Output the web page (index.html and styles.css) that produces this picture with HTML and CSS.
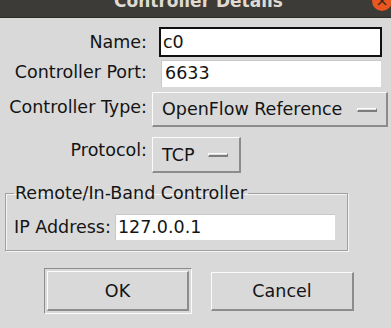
FILE: index.html
```html
<!DOCTYPE html>
<html lang="en">
<head>
    <meta charset="UTF-8">
    <meta name="viewport" content="width=device-width, initial-scale=1.0">
    <title>Controller Details</title>
    <link rel="stylesheet" href="styles.css">
</head>
<body>
    <div class="titlebar">
        <span class="title">Controller Details</span>
        <span class="close">&times;</span>
    </div>

    <div class="dialog">
        <div class="form">
            <label class="lbl">Name:</label>
            <div class="field"><div class="entry focused">c0</div></div>

            <label class="lbl">Controller Port:</label>
            <div class="field"><div class="entry port">6633</div></div>

            <label class="lbl">Controller Type:</label>
            <div class="field">
                <div class="menubutton type">
                    <span>OpenFlow Reference</span>
                    <span class="indicator"></span>
                </div>
            </div>

            <label class="lbl">Protocol:</label>
            <div class="field">
                <div class="menubutton proto">
                    <span>TCP</span>
                    <span class="indicator"></span>
                </div>
            </div>
        </div>

        <!-- remote controller box -->
        <fieldset class="group">
            <legend>Remote/In-Band Controller</legend>
            <div class="ip-row">
                <label class="ip-label">IP Address:</label>
                <div class="entry ip">127.0.0.1</div>
            </div>
        </fieldset>

        <div class="buttons">
            <div class="default-ring"><div class="btn">OK</div></div>
            <div class="btn cancel">Cancel</div>
        </div>
    </div>
</body>
</html>
```

FILE: styles.css
```css
body {
    margin: 0;
    padding: 0;
    width: 391px;
    height: 328px;
    overflow: hidden;
    background-color: #d9d9d9;
    font-family: "DejaVu Sans", sans-serif;
    font-size: 17.5px;
    color: #141414;
}
.titlebar {
    height: 17px;
    background-color: #3c3b37;
    border-bottom: 1px solid #2b2a27;
    display: flex;
    justify-content: center;
    overflow: hidden;
    position: relative;
}
.title {
    font-weight: bold;
    font-size: 17px;
    color: #dfdbd2;
    line-height: 20px;
    margin-top: -9px;
    margin-left: 6px;
}
.close {
    position: absolute;
    right: -1px;
    top: -9px;
    width: 20px;
    height: 20px;
    border-radius: 50%;
    background-color: #e9561f;
    color: #3c2a20;
    font-size: 16px;
    line-height: 20px;
    text-align: center;
}
.dialog {
    padding-top: 9px;
}
.form {
    display: grid;
    grid-template-columns: 150px 1fr;
    align-items: center;
}
.lbl {
    text-align: right;
    padding-right: 3px;
}
.entry {
    background-color: #fff;
    box-sizing: border-box;
    padding-left: 4px;
    line-height: 25px;
}
.entry.focused {
    margin-left: 9px;
    width: 223px;
    height: 30px;
    border: 2px solid #111;
    line-height: 26px;
    padding-left: 2px;
}
.entry.port {
    margin-left: 11px;
    margin-top: 3px;
    width: 220px;
    height: 27px;
    border-top: 1px solid #c8c8c8;
    border-left: 1px solid #c8c8c8;
    padding-left: 3px;
}
.menubutton {
    margin-left: 2px;
    box-sizing: border-box;
    display: flex;
    align-items: center;
    padding: 0 9px 0 9px;
    border-top: 1px solid #fbfbfb;
    border-left: 1px solid #fbfbfb;
    border-right: 2px solid #8c8c8c;
    border-bottom: 2px solid #8c8c8c;
}
.menubutton.type {
    margin-top: 5px;
    width: 236px;
    height: 35px;
    justify-content: space-between;
}
.menubutton.proto {
    margin-top: 10px;
    width: 89px;
    height: 36px;
    gap: 14px;
}
.indicator {
    display: block;
    width: 20px;
    height: 4px;
    box-sizing: border-box;
    background-color: #dcdcdc;
    border-top: 1px solid #fff;
    border-left: 1px solid #fff;
    border-right: 1px solid #7d7d7d;
    border-bottom: 2px solid #7d7d7d;
    margin-top: 1px;
}
.group {
    margin: 10px 0 0 5px;
    width: 343px;
    box-sizing: border-box;
    padding: 0 8px 10px 8px;
    border: 1px solid #a0a0a0;
    box-shadow: 1px 1px 0 #f4f4f4, inset 1px 1px 0 #f4f4f4;
}
.group legend {
    padding: 0 1px;
    margin-left: 0;
    line-height: 21px;
}
.ip-row {
    display: flex;
    align-items: center;
    margin-top: 10px;
}
.ip-label {
    padding-right: 4px;
}
.entry.ip {
    width: 220px;
    height: 26px;
    padding-left: 2px;
    border-top: 1px solid #c8c8c8;
    border-left: 1px solid #c8c8c8;
}
.buttons {
    display: flex;
    align-items: center;
    margin-top: 17px;
    padding-left: 44px;
    gap: 19px;
}
.default-ring {
    padding: 2px;
    border-top: 1px solid #8c8c8c;
    border-left: 1px solid #8c8c8c;
    border-right: 1px solid #fbfbfb;
    border-bottom: 1px solid #fbfbfb;
}
.btn {
    width: 142px;
    height: 40px;
    box-sizing: border-box;
    display: flex;
    align-items: center;
    justify-content: center;
    border-top: 1px solid #fbfbfb;
    border-left: 1px solid #fbfbfb;
    border-right: 2px solid #8c8c8c;
    border-bottom: 2px solid #8c8c8c;
}
.btn.cancel {
    width: 143px;
    height: 39px;
}
```
